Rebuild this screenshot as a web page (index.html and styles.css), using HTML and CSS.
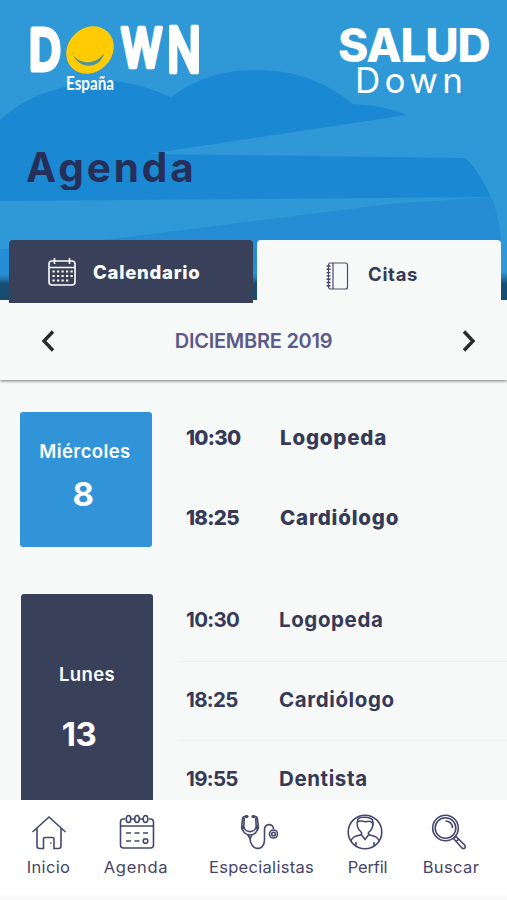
FILE: index.html
```html
<!DOCTYPE html>
<html lang="es">
<head>
<meta charset="utf-8">
<meta name="viewport" content="width=device-width, initial-scale=1">
<title>Agenda</title>
<link rel="stylesheet" href="styles.css">
</head>
<body>
<div class="app">
  <header class="hero">
    <svg class="hero-art" viewBox="0 0 507 300" aria-hidden="true">
      <path fill="#1b88d3" d="M0 120C28 94 68 82 112 81C138 83 155 91 171 97C193 81 220 70 254 70C296 69 329 84 353 104C376 105 392 109 407 115L254 138L148 154L465 158C475 166 484 182 491 197L0 201Z"/>
      <path fill="#268dd4" d="M104 240L254 221L390 204L491 197C497 210 500 225 501 240V300H0V249Z"/>
    </svg>
    <div class="brands">
      <svg class="down-logo" width="184" height="100" viewBox="0 -20 184 100" role="img" aria-label="Down España">
        <g class="logo-letters">
          <text x="6" y="49" textLength="32" lengthAdjust="spacingAndGlyphs">D</text>
          <text class="logo-w" x="98" y="46" textLength="41" lengthAdjust="spacingAndGlyphs">W</text>
          <text class="logo-n" x="144" y="51" textLength="34" lengthAdjust="spacingAndGlyphs">N</text>
        </g>
        <ellipse fill="#fecb04" cx="67" cy="29" rx="25.500" ry="22" transform="rotate(-45 67 29)"/>
        <path fill="#4b93a0" d="M50 34C58 44 72 44 81 32.500C77 48 57 49 50 34Z"/>
        <text class="logo-country" x="43" y="69" textLength="48" lengthAdjust="spacingAndGlyphs">España</text>
      </svg>
      <div class="salud"><strong>SALUD</strong><span>Down</span></div>
    </div>
    <h1>Agenda</h1>
    <nav class="tabs">
      <a class="tab tab-dark">
        <svg width="28" height="29" viewBox="0 0 28 29" fill="none" stroke="#fff" stroke-width="1.600">
          <rect x="1" y="4" width="26" height="24" rx="3"/><path d="M1 10.500H27M6.500 1V7M21.500 1V7"/>
          <path stroke-width="2.200" stroke-dasharray="2.200 2.300" d="M4.500 14.500H25M4.500 19H25M4.500 23.500H21"/>
        </svg>
        <span>Calendario</span>
      </a>
      <a class="tab tab-light">
        <svg width="23" height="28" viewBox="0 0 23 28" fill="none" stroke="#4b4a6b" stroke-width="1.200">
          <rect x="2.500" y="1" width="19" height="26" rx="2"/><path d="M7 1V27"/>
          <path stroke-width="1.400" d="M.5 4H4.500M.5 7.300H4.500M.5 10.600H4.500M.5 13.900H4.500M.5 17.200H4.500M.5 20.500H4.500M.5 23.800H4.500"/>
        </svg>
        <span>Citas</span>
      </a>
    </nav>
  </header>

  <section class="month">
    <svg width="14" height="22" viewBox="0 0 14 22"><path class="chevron" d="M12 1.500L3 11L12 20.500"/></svg>
    <h2>DICIEMBRE 2019</h2>
    <svg width="14" height="22" viewBox="0 0 14 22"><path class="chevron" d="M2 1.500L11 11L2 20.500"/></svg>
  </section>

  <main class="days">
    <article class="day today">
      <div class="date"><span class="weekday">Miércoles</span><span class="number">8</span></div>
      <ul>
        <li><time>10:30</time><span>Logopeda</span></li>
        <li><time>18:25</time><span>Cardiólogo</span></li>
      </ul>
    </article>
    <article class="day later">
      <div class="date"><span class="weekday">Lunes</span><span class="number">13</span></div>
      <ul>
        <li><time>10:30</time><span>Logopeda</span></li>
        <li><time>18:25</time><span>Cardiólogo</span></li>
        <li><time>19:55</time><span>Dentista</span></li>
      </ul>
    </article>
  </main>

  <nav class="bottom">
    <a class="n-inicio"><svg width="36" height="36" viewBox="0 0 36 36"><path d="M1.500 18L18 3L34.500 18M6 14.500V32Q6 34.500 8.500 34.500H12.500V25Q12.500 23.500 14 23.500H21.500Q23 23.500 23 25V34.500H27.500Q30 34.500 30 32V14.500"/><path d="M19 29H20.500"/></svg><span>Inicio</span></a>
    <a class="n-agenda"><svg width="36" height="36" viewBox="0 0 36 36"><path d="M6 5H4.500Q1.500 5 1.500 8V31Q1.500 34 4.500 34H31.500Q34.500 34 34.500 31V8Q34.500 5 31.500 5H30M12 5H15M21 5H24M1.500 12H34.500M7 19H12M15.500 19H20.500M24 19H29M7 27H12M15.500 27H20.500"/><ellipse cx="9.500" cy="5" rx="2.300" ry="3.500"/><ellipse cx="18" cy="5" rx="2.300" ry="3.500"/><ellipse cx="26.500" cy="5" rx="2.300" ry="3.500"/><circle cx="26.500" cy="27" r="2.300"/></svg><span>Agenda</span></a>
    <a class="n-esp"><svg width="38" height="36" viewBox="0 0 38 36"><path d="M7 2.500H5Q2.800 2.500 2.500 5L1.800 12C1.800 24 18.200 24 18.200 12L17.500 5Q17.200 2.500 15 2.500H13M4.300 4L3.800 12C4.500 19.500 15.500 19.500 16.200 12L15.700 4M7.500 20.500L10 24.500L12.500 20.500"/><path d="M10 24C10 37 24.500 38 24.500 26V16C24.500 9 33.500 9 33.500 15"/><circle cx="33.500" cy="20" r="4"/><circle cx="33.500" cy="20" r="1.800"/><path stroke-width="3.200" stroke-linecap="round" d="M6 2.500H7M13 2.500H14M2.500 13V14M17.500 13V14"/></svg><span>Especialistas</span></a>
    <a class="n-perfil"><svg width="36" height="36" viewBox="0 0 36 36"><circle cx="18" cy="18" r="16.800"/><path d="M11 5C13 2.500 23 2.500 25.500 6C27.500 11 24.500 16 21.500 18.500V21L18 25.500L14.500 21V18.500C11.500 16 8.500 11 11 5ZM10.500 8C14 5.500 16 8.500 20 7.500C22 7 24 7 26 9.500M14.500 20.500C9 22 5.500 22.500 3.800 27M21.500 20.500C27 22 30.500 22.500 32.200 27M9 28V31.500M27 28V31.500"/></svg><span>Perfil</span></a>
    <a class="n-buscar"><svg width="36" height="36" viewBox="0 0 36 36"><circle cx="14.500" cy="14" r="12.800"/><circle cx="14.500" cy="14" r="10.300"/><path d="M14.500 7C18.500 7 21.500 9.800 21.500 14M22.500 24.500L25 22.500L34 31.500Q35 35 31.500 34.500L22.500 24.500M25 27.500L28 24.800"/></svg><span>Buscar</span></a>
  </nav>
</div>
</body>
</html>
```
FILE: styles.css
```css
* { box-sizing: border-box; }
body { margin: 0; font-family: Inter, "Open Sans", sans-serif; color: #353a57; background: #f7f8f8; }
h1, h2, ul { margin: 0; padding: 0; }
ul { list-style: none; }
svg { display: block; flex: none; }
.app { width: 507px; height: 900px; overflow: hidden; display: flex; flex-direction: column; }

.hero { position: relative; height: 300px; flex: none; background: linear-gradient(transparent 272px, #174d70 284px), #2f99d7; }
.hero-art { position: absolute; inset: 0; width: 507px; height: 300px; -webkit-mask-image: linear-gradient(#000 270px, transparent 282px); mask-image: linear-gradient(#000 270px, transparent 282px); }
.brands { position: relative; height: 140px; padding: 1px 17px 0 23px; display: flex; justify-content: space-between; }
.down-logo { overflow: visible; }
.logo-letters { fill: #fff; stroke: #fff; stroke-width: 5; stroke-linejoin: round; font: 500 56px Inter, sans-serif; }
.logo-w { font-size: 53px; stroke-width: 4.500; }
.logo-n { font-size: 62px; stroke-width: 4.500; }
.logo-country { fill: #fff; font: 700 18px Lato, sans-serif; }
.salud { width: 152px; padding-top: 20px; color: #fff; display: flex; flex-direction: column; }
.salud strong { font-size: 46px; line-height: 42px; padding-top: 3px; font-weight: 800; letter-spacing: -1.200px; white-space: nowrap; }
.salud span { font-size: 35px; line-height: 36px; font-weight: 400; letter-spacing: 4.300px; margin: -4px 0 0 17px; }
h1 { position: relative; height: 50px; padding-left: 26px; overflow: hidden; font-size: 40.500px; line-height: 56px; font-weight: 700; letter-spacing: 2.900px; color: #262f58; }
.tabs { position: relative; display: flex; gap: 4px; margin: 50px 6px 0 9px; }
.tab { width: 244px; height: 63px; display: flex; align-items: center; border-radius: 4px 4px 0 0; }
.tab-dark { background: #38405a; color: #fff; padding-left: 39px; gap: 17px; font-size: 18.500px; font-weight: 800; letter-spacing: .75px; }
.tab-light { background: #f7f8f8; padding: 8px 0 0 69px; gap: 19px; font-size: 18.500px; font-weight: 650; letter-spacing: .7px; }
.tab-light span { margin-top: -4px; }

.month { height: 80px; flex: none; display: flex; align-items: center; justify-content: space-between; padding: 2px 31px 0 41px; box-shadow: 0 1px 3px #777; }
.chevron { fill: none; stroke: #2b2b2b; stroke-width: 3.400; }
h2 { font-size: 20px; font-weight: 600; letter-spacing: -.25px; margin-right: 10px; color: #5c5a88; }

.days { flex: 1; min-height: 0; overflow: hidden; padding: 32px 0 0 20px; display: flex; flex-direction: column; gap: 47px; }
.day { display: flex; flex: none; font-size: 20.500px; letter-spacing: .8px; }
.today { height: 135px; }
.date { width: 132px; border-radius: 3px; background: #3194d8; color: #fff; display: flex; flex-direction: column; align-items: center; }
.weekday { font-size: 18.500px; line-height: 24px; font-weight: 600; letter-spacing: .4px; }
.number { font-size: 33px; line-height: 40px; font-weight: 650; letter-spacing: -.5px; }
.today .date { height: 135px; padding-top: 27px; }
.today .weekday { margin-right: 2px; }
.today .number { margin: 11px 6px 0 0; }
.later .date { height: 260px; margin-left: 1px; background: #38405a; padding-top: 68px; }
.later .number { margin: 28px 16px 0 0; }
.day ul { flex: 1; margin-left: 28px; }
.today ul { font-weight: 800; margin-top: -14px; }
.later ul { font-weight: 650; letter-spacing: .6px; margin-left: 27px; margin-top: -12px; }
.day li { height: 79.500px; display: flex; align-items: center; padding-left: 6px; }
.later li { height: 79px; padding-bottom: 4px; }
.later li + li { border-top: 1px solid #f0f1f2; }
time { width: 94px; letter-spacing: -.7px; }
.later time { width: 93px; }

.bottom { height: 100px; flex: none; background: linear-gradient(#fff 92%, #f8f8f8); display: grid; grid-template-columns: 97px 78px 173px 39px 120px; }
.bottom a { display: flex; flex-direction: column; align-items: center; padding-top: 14px; font-size: 16.500px; line-height: 20px; color: #454668; white-space: nowrap; }
.bottom svg { fill: none; stroke: #46476e; stroke-width: 1.600; margin-bottom: 7px; }
.n-inicio, .n-esp { letter-spacing: .3px; }
.n-agenda { letter-spacing: .7px; }
.bottom .n-perfil { letter-spacing: -.2px; }
.n-buscar { letter-spacing: .4px; }
.n-agenda svg { margin-left: 2px; }
.n-esp svg { margin-right: 5px; }
.n-perfil svg { margin-right: 6px; }
.bottom .n-buscar { padding-left: 8px; }
.n-buscar svg { margin-right: 4px; }
```
